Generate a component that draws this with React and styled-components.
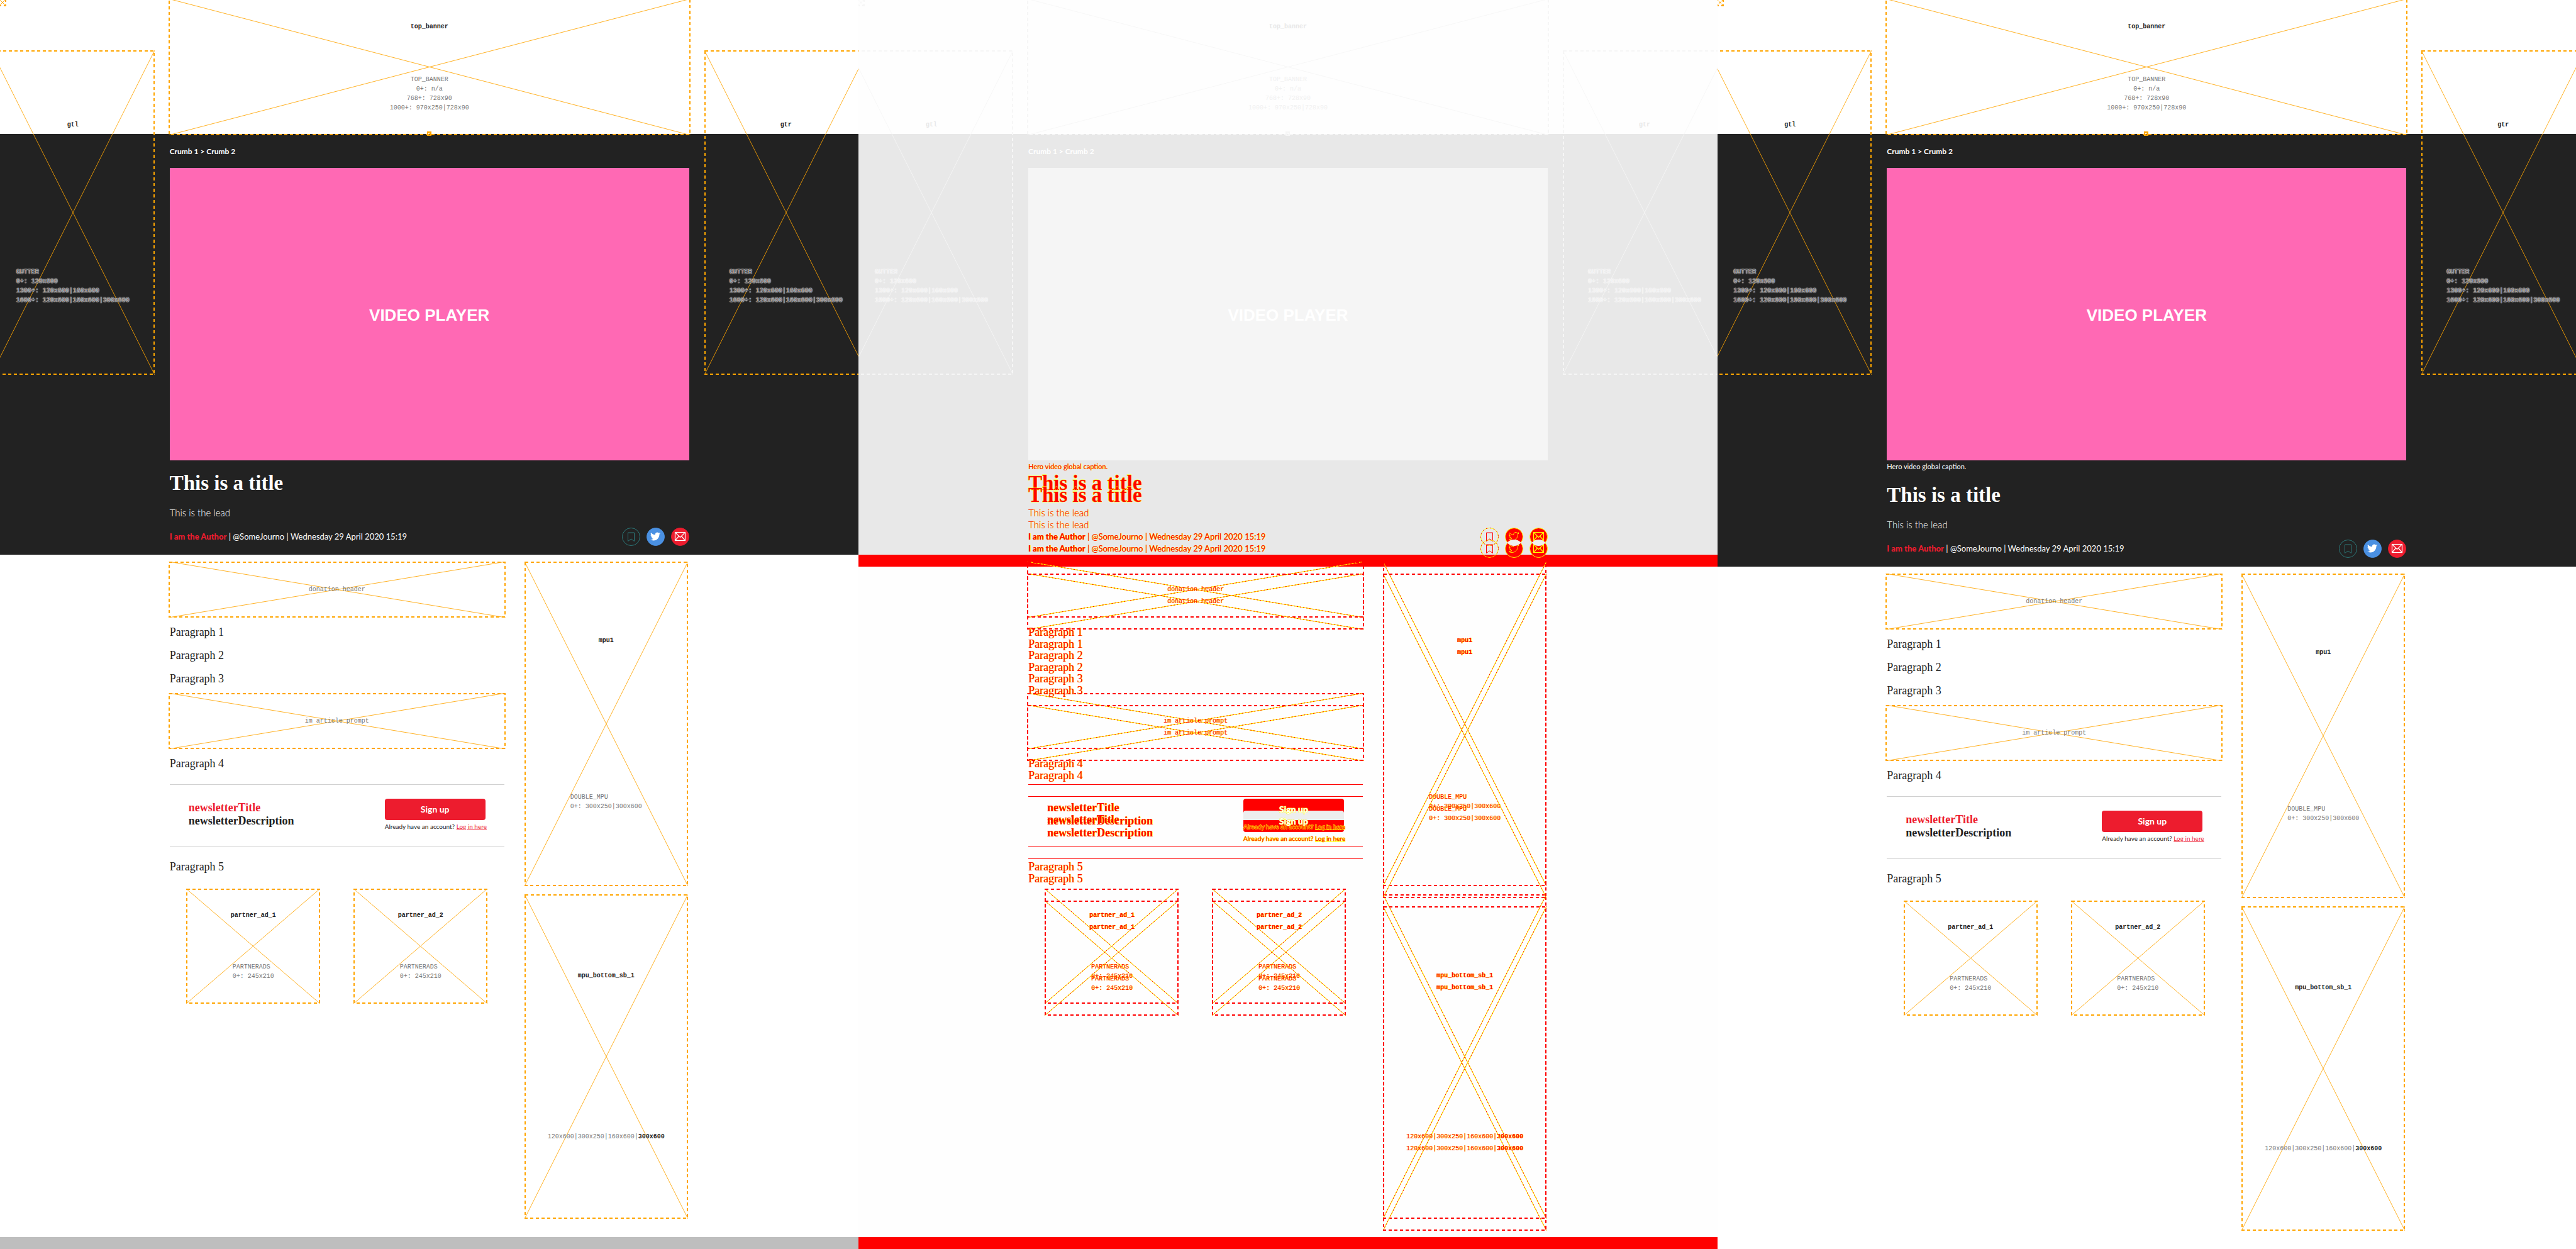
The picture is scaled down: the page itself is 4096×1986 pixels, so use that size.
import React from "react";
import styled, { createGlobalStyle, css, ThemeProvider } from "styled-components";
import { FaTwitter } from "react-icons/fa";

const sans = '"Lato", "Open Sans", sans-serif';
const serif = '"Liberation Serif", "Noto Serif", serif';
const mono = '"Liberation Mono", "Courier New", monospace';

/* Height that the extra caption line adds to the hero. */
const SHIFT = 19;

const liveTheme = {
  page: "#ffffff",
  hero: "#222222",
  video: "#ff69b4",
  heroText: "#ffffff",
  fixedLine: "#ffa500",
  fixedName: "#222222",
  fixedSizes: "#767676",
  gutterSizes: "#555555",
  glow: "#ffffff",
  line: "#ffa500",
  name: "#222222",
  sizes: "#767676",
  text: "#222222",
  accent: "#ed1c2e",
  rule: "#d0d0d0",
  button: "#ed1c2e",
  buttonText: "#ffffff",
  filler: "#bebebe",
};

const diffTheme = {
  ...liveTheme,
  diff: true,
  page: "#fefefe",
  hero: "#e8e8e8",
  video: "#f5f5f5",
  heroText: "#ff0000",
  crumb: "#ffffff",
  fixedLine: "#f6f6f6",
  fixedName: "#e8e8e8",
  fixedSizes: "#f1f1f1",
  gutterSizes: "#eeeeee",
  line: "#ff0000",
  name: "#ff0000",
  sizes: "#ff0000",
  text: "#ff0000",
  accent: "#ff0000",
  rule: "#ff0000",
  button: "#ff0000",
  filler: "#ff0000",
};

const overlayTheme = {
  ...diffTheme,
  overlay: true,
  page: "transparent",
  hero: "transparent",
  button: "linear-gradient(#ededed 15px, #ff0000 15px)",
  filler: "transparent",
};

/* Yellow rim of changed glyphs: a full one for headings, a light one for small text. */
const rim = css`
  ${({ theme }) => theme.diff && css`
    -webkit-text-stroke: 1px #ffff00;
    paint-order: stroke fill;
  `}
`;
const edge = css`
  ${({ theme }) => theme.diff && css`text-shadow: 1px 0 0 #ffff00;`}
`;

const unchanged = css`
  ${({ theme }) => theme.overlay && css`visibility: hidden;`}
`;

const GlobalStyle = createGlobalStyle`
  *, *::before, *::after { box-sizing: border-box; }
  body { margin: 0; background: #ffffff; }
  h1, h2, p { margin: 0; }
`;

const Page = styled.main`
  display: grid;
  grid-template-columns: repeat(3, minmax(0, 1fr));
  min-height: 100vh;
`;

const Panel = styled.section`
  position: relative;
  display: flex;
  flex-direction: column;
  overflow: hidden;
`;

const Sheet = styled.article`
  flex: 1;
  display: flex;
  flex-direction: column;
  background: ${({ theme }) => theme.page};
  ${({ theme }) => theme.overlay && css`
    position: absolute;
    inset: 0;
  `}
`;

const Column = styled.div`
  width: 826px;
  margin: 0 auto;
`;

const Top = styled.header`
  ${unchanged}
`;

const Slot = styled.div`
  position: relative;
  width: ${({ $w }) => $w || "100%"};
  height: ${({ $h }) => $h};
  display: flex;
  flex-direction: column;
  align-items: center;
  justify-content: space-around;
  font: 10px/15px ${mono};
`;

const Frame = styled.svg`
  position: absolute;
  left: -2px;
  top: -2px;
  width: calc(100% + 4px);
  height: calc(100% + 4px);
  fill: none;
  line { stroke-width: 1px; stroke-opacity: ${({ $strong }) => ($strong ? 1 : 0.85)}; }
  rect {
    width: calc(100% - 2px);
    height: calc(100% - 2px);
    stroke-width: 2px;
  }
`;

const SlotName = styled.strong`
  position: relative;
  font-weight: 700;
  color: ${({ theme, $fixed }) => ($fixed ? theme.fixedName : theme.name)};
  ${({ $fixed }) => !$fixed && edge}
`;

const SlotSizes = styled.div`
  position: relative;
  text-align: ${({ $center }) => ($center ? "center" : "left")};
  white-space: pre;
  color: ${({ theme, $fixed }) => ($fixed ? theme.fixedSizes : theme.sizes)};
  strong { color: ${({ theme }) => theme.name}; }
  ${({ $fixed }) => !$fixed && edge}
  ${({ $glow, theme }) => $glow && css`
    color: ${theme.gutterSizes};
    text-shadow: 0 0 1px ${theme.glow}, 0 0 1px ${theme.glow}, 0 0 2px ${theme.glow};
  `}
`;

const GutterHolder = styled.aside`
  position: absolute;
  top: 82px;
  ${({ $side }) => ($side === "left" ? "right" : "left")}: calc(50% + 439px);
  ${unchanged}
`;

const CornerHolder = styled.div`
  position: absolute;
  top: 0;
  left: 0;
  ${unchanged}
`;

const PinHolder = styled.div`
  position: absolute;
  top: 211px;
  left: calc(50% - 2px);
  ${unchanged}
`;

const Hero = styled.section`
  background: ${({ theme }) => theme.hero};
  padding: 20px 0 14px;
  color: ${({ theme }) => theme.heroText};
  font-family: ${sans};
  ${({ theme }) => theme.diff && !theme.overlay && css`box-shadow: 0 ${SHIFT}px 0 #ff0000;`}
`;

const Crumbs = styled.nav`
  font-size: 12px;
  font-weight: 700;
  line-height: 16px;
  margin-bottom: 18px;
  ${unchanged}
  a { color: ${({ theme }) => theme.crumb || theme.heroText}; text-decoration: none; }
  color: ${({ theme }) => theme.crumb || theme.heroText};
`;

const Video = styled.div`
  aspect-ratio: 16 / 9;
  display: grid;
  place-items: center;
  background: ${({ theme }) => theme.video};
  padding-top: 3px;
  color: #ffffff;
  font: 700 26px/30px "Liberation Sans", Arial, sans-serif;
  ${unchanged}
`;

const Caption = styled.p`
  font-size: 11px;
  line-height: ${SHIFT}px;
  ${edge}
`;

const Title = styled.h1`
  margin-top: 18px;
  font: 700 33px/36px ${serif};
  ${rim}
`;

const Lead = styled.p`
  margin: 19px 0 14px;
  font-size: 15px;
  font-weight: 300;
  line-height: 20px;
  ${edge}
`;

const Meta = styled.div`
  display: flex;
  align-items: center;
  justify-content: space-between;
  height: 29px;
`;

const Byline = styled.p`
  font-size: 13px;
  line-height: 20px;
  ${edge}
`;

const Author = styled.a`
  color: ${({ theme }) => theme.accent};
  font-weight: 900;
  text-decoration: none;
`;

const Share = styled.div`
  display: flex;
  gap: 10px;
`;

const roundIcon = css`
  position: relative;
  display: block;
  width: 29px;
  height: 29px;
  padding: 0;
  border: 0;
  background: none;
  svg { display: block; }
`;
const IconButton = styled.button`${roundIcon}`;
const IconLink = styled.a`${roundIcon}`;

const Body = styled.div`
  display: grid;
  grid-template-columns: minmax(0, 1fr) 256px;
  column-gap: 34px;
  padding: 13px 4px 31px 0;
`;

const Side = styled.aside`
  display: flex;
  flex-direction: column;
  gap: 17px;
`;

const Paragraphs = styled.div`
  display: grid;
  row-gap: 15px;
  padding: 14px 0;
  color: ${({ theme }) => theme.text};
  font: 18px/22px ${serif};
  ${edge}
`;

const Newsletter = styled.section`
  display: flex;
  align-items: center;
  justify-content: space-between;
  height: 100px;
  margin: 8px 0 6px;
  padding: 0 30px 4px;
  border: solid ${({ theme }) => theme.rule};
  border-width: 1px 0;
`;

const NewsletterHeading = styled.h2`
  font: 700 18px/21px ${serif};
  color: ${({ theme }) => theme.text};
  ${edge}
  span { display: block; }
  span:first-child { color: ${({ theme }) => theme.accent}; }
`;

const SignUpBox = styled.div`
  width: 160px;
  font-family: ${sans};
`;

const SignUp = styled.button`
  display: block;
  width: 100%;
  height: 34px;
  padding: 0;
  border: 0;
  border-radius: 4px;
  background: ${({ theme }) => theme.button};
  color: ${({ theme }) => theme.buttonText};
  font: 700 14px/20px ${sans};
  ${rim}
  span { position: relative; z-index: 1; }
`;

const LogIn = styled.p`
  position: relative;
  z-index: 1;
  margin-top: 4px;
  font-size: 10px;
  line-height: 12px;
  white-space: nowrap;
  color: ${({ theme }) => theme.text};
  ${rim}
  a { color: ${({ theme }) => theme.accent}; }
`;

const Partners = styled.div`
  display: flex;
  justify-content: space-around;
  padding-top: 12px;
`;

const Filler = styled.footer`
  flex: 1;
  background: ${({ theme }) => theme.filler};
`;

function Cross({ fixed, solid, theme }) {
  const color = fixed ? theme.fixedLine : theme.line;
  const mixed = theme.diff && !fixed;
  const cross = (stroke, dash) => (
    <>
      <line x1="0" y1="0" x2="100%" y2="100%" stroke={stroke} strokeDasharray={dash} />
      <line x1="100%" y1="0" x2="0" y2="100%" stroke={stroke} strokeDasharray={dash} />
    </>
  );
  return (
    <Frame aria-hidden="true" $strong={mixed}>
      {mixed && cross("#ffee00")}
      {mixed && cross("#ffee00")}
      {cross(color, mixed ? "2 3" : undefined)}
      <rect x="1" y="1" stroke={color} strokeDasharray={solid ? undefined : "5 4"} />
    </Frame>
  );
}

function AdSlot({ theme, name, sizes, w, h, fixed, center, glow, solid }) {
  return (
    <Slot $w={w} $h={h}>
      <Cross fixed={fixed} solid={solid} theme={theme} />
      {name && <SlotName $fixed={fixed}>{name}</SlotName>}
      {sizes && <SlotSizes $fixed={fixed} $center={center} $glow={glow}>{sizes}</SlotSizes>}
    </Slot>
  );
}

function Disc({ theme, color, outlined, children }) {
  const diff = theme.diff;
  return (
    <svg width="29" height="29" viewBox="0 0 29 29" fill="none" aria-hidden="true">
      <circle
        cx="14.5"
        cy="14.5"
        r="14"
        fill={outlined ? "none" : diff ? "#ff0000" : color}
        stroke={diff ? "#ffff00" : color}
      />
      {diff && outlined && <circle cx="14.5" cy="14.5" r="14" stroke="#ff0000" strokeDasharray="2 4" />}
      {children}
      {theme.overlay && !outlined && (
        <path d="M3.55 5A14.5 14.5 0 0 1 25.45 5A14.5 14.5 0 0 1 3.55 5Z" fill="#f0f0f0" />
      )}
    </svg>
  );
}

function ShareIcons({ theme }) {
  const diff = theme.diff;
  return (
    <Share>
      <IconButton type="button" aria-label="Save">
        <Disc theme={theme} color="#2c7a7b" outlined>
          <path d="M9.5 8h10v13.5l-5-3.4-5 3.4z" stroke={diff ? "#ff0000" : "#2c7a7b"} />
        </Disc>
      </IconButton>
      <IconLink href="#twitter" aria-label="Twitter">
        <Disc theme={theme} color="#4a90e2">
          <FaTwitter x="6" y="6" width="17" height="17" color={diff ? "#ff0000" : "#ffffff"} stroke={diff ? "#ffff00" : "none"} strokeWidth="28" />
        </Disc>
      </IconLink>
      <IconLink href="#email" aria-label="Email">
        <Disc theme={theme} color="#ed1c2e">
          <g stroke={diff ? "#ffff00" : "#ffffff"} strokeWidth="1.2">
            <rect x="6.5" y="7.5" width="16" height="13" />
            <path d="M6.5 7.5l8 8 8-8M6.5 20.5l6-7M22.5 20.5l-6-7" />
          </g>
        </Disc>
      </IconLink>
    </Share>
  );
}

function Story({ theme, caption }) {
  const slot = { theme };
  const gutter = "GUTTER\n0+: 120x600\n1300+: 120x600|160x600\n1600+: 120x600|160x600|300x600";
  return (
    <ThemeProvider theme={theme}>
      <Sheet>
        <Top>
          <Column>
            <AdSlot {...slot} h="213px" fixed center name="top_banner" sizes={"TOP_BANNER\n0+: n/a\n768+: 728x90\n1000+: 970x250|728x90"} />
          </Column>
        </Top>
        <Hero>
          <Column>
            <Crumbs aria-label="Breadcrumb">
              <a href="#crumb-1">Crumb 1</a> &gt; <a href="#crumb-2">Crumb 2</a>
            </Crumbs>
            <Video>VIDEO PLAYER</Video>
            {caption && <Caption>Hero video global caption.</Caption>}
            <Title>This is a title</Title>
            <Lead>This is the lead</Lead>
            <Meta>
              <Byline>
                <Author href="#author">I am the Author</Author> | @SomeJourno | Wednesday 29 April 2020 15:19
              </Byline>
              <ShareIcons theme={theme} />
            </Meta>
          </Column>
        </Hero>
        <Column>
          <Body>
            <div>
              <AdSlot {...slot} h="85px" sizes="donation header" />
              <Paragraphs>
                <p>Paragraph 1</p>
                <p>Paragraph 2</p>
                <p>Paragraph 3</p>
              </Paragraphs>
              <AdSlot {...slot} h="85px" sizes="im article prompt" />
              <Paragraphs>
                <p>Paragraph 4</p>
              </Paragraphs>
              <Newsletter>
                <NewsletterHeading>
                  <span>newsletterTitle</span>
                  <span>newsletterDescription</span>
                </NewsletterHeading>
                <SignUpBox>
                  <SignUp type="button"><span>Sign up</span></SignUp>
                  <LogIn>
                    Already have an account? <a href="#login">Log in here</a>
                  </LogIn>
                </SignUpBox>
              </Newsletter>
              <Paragraphs>
                <p>Paragraph 5</p>
              </Paragraphs>
              <Partners>
                <AdSlot {...slot} w="209px" h="179px" name="partner_ad_1" sizes={"PARTNERADS\n0+: 245x210"} />
                <AdSlot {...slot} w="209px" h="179px" name="partner_ad_2" sizes={"PARTNERADS\n0+: 245x210"} />
              </Partners>
            </div>
            <Side>
              <AdSlot {...slot} h="512px" name="mpu1" sizes={"DOUBLE_MPU\n0+: 300x250|300x600"} />
              <AdSlot
                {...slot}
                h="512px"
                name="mpu_bottom_sb_1"
                sizes={<>120x600|300x250|160x600|<strong>300x600</strong></>}
              />
            </Side>
          </Body>
        </Column>
        <Filler />
        <GutterHolder $side="left">
          <AdSlot {...slot} w="256px" h="512px" fixed glow name="gtl" sizes={gutter} />
        </GutterHolder>
        <GutterHolder $side="right">
          <AdSlot {...slot} w="256px" h="512px" fixed glow name="gtr" sizes={gutter} />
        </GutterHolder>
        <CornerHolder>
          <AdSlot {...slot} w="8px" h="8px" fixed />
        </CornerHolder>
        <PinHolder>
          <AdSlot {...slot} w="3px" h="3px" fixed solid />
        </PinHolder>
      </Sheet>
    </ThemeProvider>
  );
}

export default function App() {
  return (
    <Page>
      <GlobalStyle />
      <Panel aria-label="Before">
        <Story theme={liveTheme} />
      </Panel>
      <Panel aria-label="Difference">
        <Story theme={diffTheme} />
        <Story theme={overlayTheme} caption />
      </Panel>
      <Panel aria-label="After">
        <Story theme={liveTheme} caption />
      </Panel>
    </Page>
  );
}
